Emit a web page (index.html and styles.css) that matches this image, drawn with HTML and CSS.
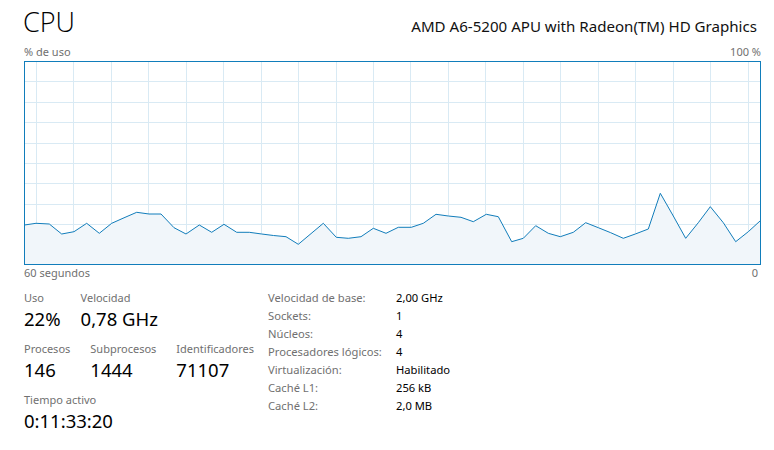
FILE: index.html
```html
<!DOCTYPE html>
<html lang="es">
<head>
<meta charset="utf-8">
<title>CPU</title>
<link rel="stylesheet" href="styles.css">
</head>
<body>
<div class="page">
  <header class="head">
    <h1 class="title">CPU</h1>
    <div class="model">AMD A6-5200 APU with Radeon(TM) HD Graphics</div>
  </header>
  <div class="axis axis-top"><span>% de uso</span><span>100 %</span></div>
  <svg class="graph" width="737" height="204" viewBox="0 0 737 204">
    <g class="grid">
      <path d="M12.5 0V204M49.5 0V204M87.5 0V204M124.5 0V204M162.5 0V204M199.5 0V204M237.5 0V204M274.5 0V204M312.5 0V204M349.5 0V204M386.5 0V204M424.5 0V204M461.5 0V204M499.5 0V204M536.5 0V204M574.5 0V204M611.5 0V204M649.5 0V204M686.5 0V204M724.5 0V204"/>
      <path d="M0 20.5H737M0 41.5H737M0 61.5H737M0 82.5H737M0 102.5H737M0 122.5H737M0 143.5H737M0 163.5H737M0 183.5H737"/>
    </g>
    <polygon class="area" points="0.5,164 12,162.3 25.3,163 37.7,173 50,170.7 62.7,162.3 75.3,172.3 87.7,162.3 100,156.8 112.7,151.3 125,153 137,153 150,166.7 162,173 175.3,164 187.7,171.3 200,163.3 212.7,171.3 225.3,171.3 237.7,173 249.5,174.5 262,175.7 274.3,183.3 299.3,162.3 312.3,176.3 324.3,177.3 337,175.7 349.3,167.3 362,172.3 374.3,166.3 387.3,166.3 399.3,162.3 412,153.3 424.3,155 437,156.3 449.3,160.7 462.3,153.3 474.3,155.7 487.7,180.7 499.3,177.3 511.7,164.7 524.3,172.3 536.3,175.7 549.3,171.3 561.7,161.7 574.3,166.7 586.7,171.7 599.3,177.3 611.3,173 624.3,168 636.3,132.3 649.3,155 661.7,177.3 674.3,161.7 686.3,145.7 699.3,161.7 711.7,180.7 724.3,170.7 736,160 736,203 0.5,203"/>
    <polyline class="line" points="0.5,164 12,162.3 25.3,163 37.7,173 50,170.7 62.7,162.3 75.3,172.3 87.7,162.3 100,156.8 112.7,151.3 125,153 137,153 150,166.7 162,173 175.3,164 187.7,171.3 200,163.3 212.7,171.3 225.3,171.3 237.7,173 249.5,174.5 262,175.7 274.3,183.3 299.3,162.3 312.3,176.3 324.3,177.3 337,175.7 349.3,167.3 362,172.3 374.3,166.3 387.3,166.3 399.3,162.3 412,153.3 424.3,155 437,156.3 449.3,160.7 462.3,153.3 474.3,155.7 487.7,180.7 499.3,177.3 511.7,164.7 524.3,172.3 536.3,175.7 549.3,171.3 561.7,161.7 574.3,166.7 586.7,171.7 599.3,177.3 611.3,173 624.3,168 636.3,132.3 649.3,155 661.7,177.3 674.3,161.7 686.3,145.7 699.3,161.7 711.7,180.7 724.3,170.7 736,160"/>
    <rect class="frame" x="0.5" y="0.5" width="736" height="203"/>
  </svg>
  <div class="axis axis-bottom"><span>60 segundos</span><span class="zero">0</span></div>

  <section class="stats">
    <div class="dyn">
      <div class="row">
        <div class="stat"><div class="lbl">Uso</div><div class="val">22%</div></div>
        <div class="stat"><div class="lbl">Velocidad</div><div class="val">0,78 GHz</div></div>
      </div>
      <div class="row">
        <div class="stat"><div class="lbl">Procesos</div><div class="val">146</div></div>
        <div class="stat"><div class="lbl">Subprocesos</div><div class="val">1444</div></div>
        <div class="stat"><div class="lbl">Identificadores</div><div class="val">71107</div></div>
      </div>
      <div class="row">
        <div class="stat"><div class="lbl">Tiempo activo</div><div class="val">0:11:33:20</div></div>
      </div>
    </div>
    <dl class="info">
      <dt>Velocidad de base:</dt><dd>2,00 GHz</dd>
      <dt>Sockets:</dt><dd>1</dd>
      <dt>Núcleos:</dt><dd>4</dd>
      <dt>Procesadores lógicos:</dt><dd>4</dd>
      <dt>Virtualización:</dt><dd>Habilitado</dd>
      <dt>Caché L1:</dt><dd>256 kB</dd>
      <dt>Caché L2:</dt><dd>2,0 MB</dd>
    </dl>
  </section>
</div>
</body>
</html>
```
FILE: styles.css
```css
* { box-sizing: border-box; }
html, body { margin: 0; padding: 0; background: #fff; }
body {
  font-family: "Segoe UI", "Noto Sans", "Open Sans", sans-serif;
  color: #000;
}
.page {
  width: 774px;
  height: 450px;
  padding: 0 13px 0 24px;
  overflow: hidden;
}
.head {
  display: flex;
  justify-content: space-between;
  align-items: baseline;
  height: 45px;
  padding-top: 4px;
}
.title {
  margin: 0 0 0 -1px;
  font-family: "Open Sans", "Noto Sans", sans-serif;
  font-weight: 300;
  font-size: 27px;
  line-height: 36px;
}
.model {
  margin-right: 4px;
  font-size: 15.1px;
  line-height: 22px;
  color: #111;
}
.axis {
  display: flex;
  justify-content: space-between;
  font-size: 11px;
  line-height: 14px;
  color: #707070;
}
.axis-top { height: 16px; }
.axis-bottom { padding-top: 1px; }
.zero { margin-right: 3px; }
.graph { display: block; }
.grid path { stroke: #d9eaf4; stroke-width: 1; fill: none; }
.area { fill: #f1f6fa; stroke: none; }
.line { fill: none; stroke: #117dbb; stroke-width: 1; stroke-linejoin: round; }
.frame { fill: none; stroke: #117dbb; stroke-width: 1; }
.stats {
  display: flex;
  gap: 14px;
  padding-top: 10px;
}
.dyn { width: 230px; display: flex; flex-direction: column; gap: 9px; }
.row { display: flex; gap: 20px; }
.lbl { font-size: 11px; line-height: 16px; color: #707070; }
.val { font-size: 18.5px; line-height: 26px; }
.info {
  margin: 0;
  display: grid;
  grid-template-columns: 128px auto;
  grid-auto-rows: 18px;
  font-size: 11.2px;
  line-height: 16px;
}
.info dt { color: #707070; }
.info dd { margin: 0; color: #000; }
```
